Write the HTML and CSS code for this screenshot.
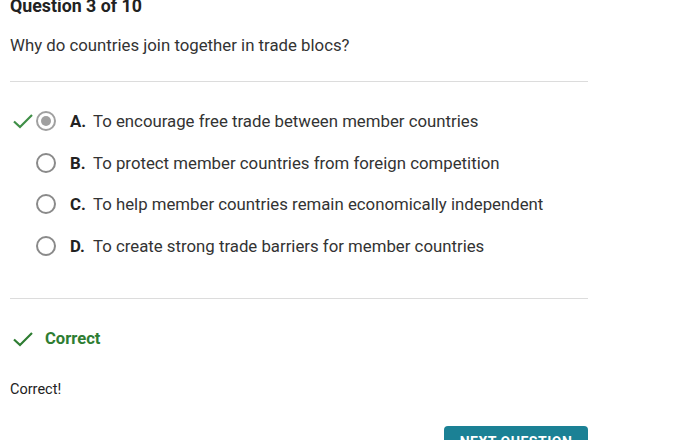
FILE: index.html
```html
<!DOCTYPE html>
<html>
<head>
<meta charset="utf-8">
<link rel="stylesheet" href="styles.css">
</head>
<body>
<div class="page">
  <h1 class="title">Question 3 of 10</h1>
  <p class="question">Why do countries join together in trade blocs?</p>
  <hr class="divider">
  <ul class="options">
    <li class="option">
      <span class="mark"><svg width="22" height="16" viewBox="0 0 22 16"><path d="M2 8.5 L8 14 L20 2" fill="none" stroke="#3f8f47" stroke-width="2.2"/></svg></span>
      <span class="radio selected"></span>
      <span class="letter">A.</span>
      <span class="text">To encourage free trade between member countries</span>
    </li>
    <li class="option">
      <span class="mark"></span>
      <span class="radio"></span>
      <span class="letter">B.</span>
      <span class="text">To protect member countries from foreign competition</span>
    </li>
    <li class="option">
      <span class="mark"></span>
      <span class="radio"></span>
      <span class="letter">C.</span>
      <span class="text">To help member countries remain economically independent</span>
    </li>
    <li class="option">
      <span class="mark"></span>
      <span class="radio"></span>
      <span class="letter">D.</span>
      <span class="text">To create strong trade barriers for member countries</span>
    </li>
  </ul>
  <hr class="divider">
  <div class="result">
    <svg width="22" height="16" viewBox="0 0 22 16"><path d="M2 8.5 L8 14 L20 2" fill="none" stroke="#2e7d32" stroke-width="2.2"/></svg>
    <span class="result-label">Correct</span>
  </div>
  <p class="feedback">Correct!</p>
  <div class="actions">
    <button class="next">NEXT QUESTION</button>
  </div>
</div>
</body>
</html>
```
FILE: styles.css
```css
html, body {
  margin: 0;
  padding: 0;
  background: #fff;
}
body {
  font-family: Roboto, "Liberation Sans", sans-serif;
  color: #333;
  overflow: hidden;
}
.page {
  width: 578px;
  padding-left: 10px;
}
.title {
  margin: -4px 0 0 0;
  font-size: 17.8px;
  line-height: 20px;
  font-weight: 700;
  color: #222;
}
.question {
  margin: 18px 0 0 0;
  font-size: 16.8px;
  line-height: 22px;
}
.divider {
  border: 0;
  border-top: 1px solid #dcdcdc;
  margin: 25px 0 0 0;
}
.options {
  list-style: none;
  margin: 28px 0 0 0;
  padding: 0;
  display: flex;
  flex-direction: column;
  gap: 19.7px;
}
.option {
  display: flex;
  align-items: center;
  height: 22px;
  font-size: 16.8px;
}
.mark {
  width: 26px;
  display: flex;
  align-items: center;
  padding-left: 2px;
  box-sizing: border-box;
}
.radio {
  width: 20px;
  height: 20px;
  box-sizing: border-box;
  border: 2px solid #8a8a8a;
  border-radius: 50%;
  display: flex;
  align-items: center;
  justify-content: center;
  margin-right: 14px;
}
.radio.selected {
  border-color: #a0a0a0;
}
.radio.selected::after {
  content: "";
  width: 10px;
  height: 10px;
  border-radius: 50%;
  background: #a0a0a0;
}
.letter {
  font-weight: 700;
  width: 23px;
  color: #222;
}
.text {
  color: #333;
}
.options + .divider {
  margin-top: 41px;
}
.result {
  display: flex;
  align-items: center;
  gap: 11px;
  margin-top: 30px;
  padding-left: 2px;
}
.result-label {
  font-size: 16.6px;
  font-weight: 700;
  color: #2e7d32;
}
.feedback {
  margin: 32px 0 0 0;
  font-size: 14.5px;
  line-height: 20px;
  color: #222;
}
.actions {
  display: flex;
  justify-content: flex-end;
  margin-top: 26px;
}
.next {
  width: 144px;
  height: 36px;
  background: #1b8195;
  border: 0;
  border-radius: 4px;
  color: #fff;
  font-family: Roboto, "Liberation Sans", sans-serif;
  font-size: 14px;
  font-weight: 700;
  letter-spacing: 0.5px;
  padding: 6px 0 0 0;
  text-align: center;
  line-height: 20px;
  display: flex;
  justify-content: center;
  align-items: flex-start;
}
```
